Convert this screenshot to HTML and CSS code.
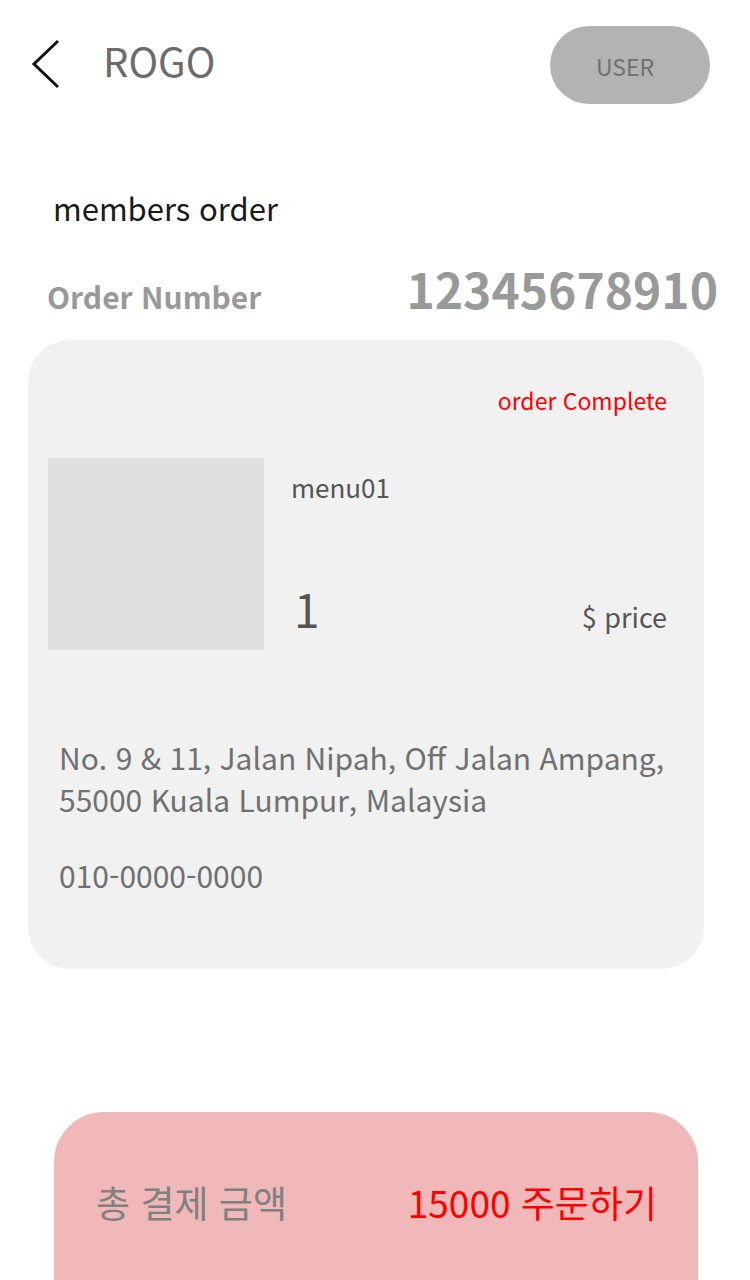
FILE: index.html
```html
<!DOCTYPE html>
<html lang="ko">
<head>
<meta charset="utf-8">
<title>members order</title>
<link rel="stylesheet" href="styles.css">
</head>
<body>
<div class="page">
  <header class="header">
    <svg class="back" width="30" height="50" viewBox="0 0 30 50" aria-hidden="true">
      <polyline points="27,2 3,25 27,48" fill="none" stroke="#111" stroke-width="3" />
    </svg>
    <div class="logo">ROGO</div>
    <div class="user">USER</div>
  </header>

  <h1 class="section-title">members order</h1>

  <div class="order-row">
    <span class="order-label">Order Number</span>
    <span class="order-num">12345678910</span>
  </div>

  <section class="card">
    <div class="status">order Complete</div>
    <div class="item">
      <div class="thumb"></div>
      <div class="item-info">
        <div class="item-name">menu01</div>
        <div class="item-bottom">
          <span class="qty">1</span>
          <span class="price">$ price</span>
        </div>
      </div>
    </div>
    <p class="address">No. 9 &amp; 11, Jalan Nipah, Off Jalan Ampang,<br>55000 Kuala Lumpur, Malaysia</p>
    <p class="phone">010-0000-0000</p>
  </section>

  <div class="pay">
    <span class="pay-label">총 결제 금액</span>
    <span class="pay-action">15000 주문하기</span>
  </div>
</div>
</body>
</html>
```

FILE: styles.css
```css
html, body {
  margin: 0;
  padding: 0;
  background: #ffffff;
}

body {
  font-family: "Noto Sans CJK KR", "Noto Sans", sans-serif;
  width: 750px;
  height: 1280px;
  overflow: hidden;
}

.page {
  display: flex;
  flex-direction: column;
}

.header {
  display: flex;
  align-items: center;
  padding: 26px 40px 0 31px;
  height: 78px;
}

.back {
  display: block;
  margin-top: -2px;
}

.logo {
  margin-left: 42px;
  font-size: 40px;
  color: #6b6b6b;
  line-height: 1;
  margin-top: -10px;
}

.user {
  margin-left: auto;
  width: 160px;
  height: 78px;
  border-radius: 39px;
  background: #b3b3b3;
  color: #707070;
  font-size: 23px;
  display: flex;
  align-items: center;
  justify-content: center;
  padding: 2px 10px 0 0;
  box-sizing: border-box;
}

.section-title {
  margin: 84px 0 0 53px;
  font-size: 31px;
  font-weight: 400;
  color: #1a1a1a;
  line-height: 40px;
}

.order-row {
  display: flex;
  justify-content: space-between;
  align-items: baseline;
  padding: 0 32px 0 47px;
  margin-top: 38px;
  height: 44px;
}

.order-label {
  font-size: 30px;
  font-weight: 700;
  color: #999999;
}

.order-num {
  font-size: 48px;
  font-weight: 700;
  color: #999999;
  line-height: 44px;
}

.card {
  margin: 30px 46px 0 28px;
  height: 629px;
  box-sizing: border-box;
  background: #f1f1f1;
  border-radius: 42px;
  padding: 44px 37px 0 20px;
}

.status {
  text-align: right;
  color: #ff0000;
  font-size: 23px;
  line-height: 32px;
}

.item {
  display: flex;
  margin-top: 42px;
}

.thumb {
  width: 216px;
  height: 192px;
  background: #dfdfdf;
  flex: none;
}

.item-info {
  flex: 1;
  display: flex;
  flex-direction: column;
  justify-content: space-between;
  padding-left: 27px;
}

.item-name {
  font-size: 26px;
  color: #555555;
  line-height: 30px;
  margin-top: 14px;
}

.item-bottom {
  display: flex;
  justify-content: space-between;
  align-items: baseline;
  margin-bottom: 14px;
}

.qty {
  font-size: 46px;
  color: #555555;
  line-height: 50px;
  padding-left: 3px;
}

.price {
  font-size: 27px;
  color: #555555;
}

.address {
  margin: 86px 0 0 11px;
  font-size: 30px;
  line-height: 42px;
  color: #707070;
}

.phone {
  margin: 34px 0 0 11px;
  font-size: 30px;
  line-height: 42px;
  color: #707070;
}

.pay {
  margin: 143px 52px 0 54px;
  height: 200px;
  background: #f0b8b8;
  border-radius: 50px 50px 0 0;
  display: flex;
  justify-content: space-between;
  align-items: flex-start;
  padding: 68px 41px 0 42px;
  box-sizing: border-box;
}

.pay-label {
  font-size: 37px;
  color: #808080;
  line-height: 44px;
}

.pay-action {
  font-size: 37px;
  color: #ff0000;
  line-height: 44px;
}
```
